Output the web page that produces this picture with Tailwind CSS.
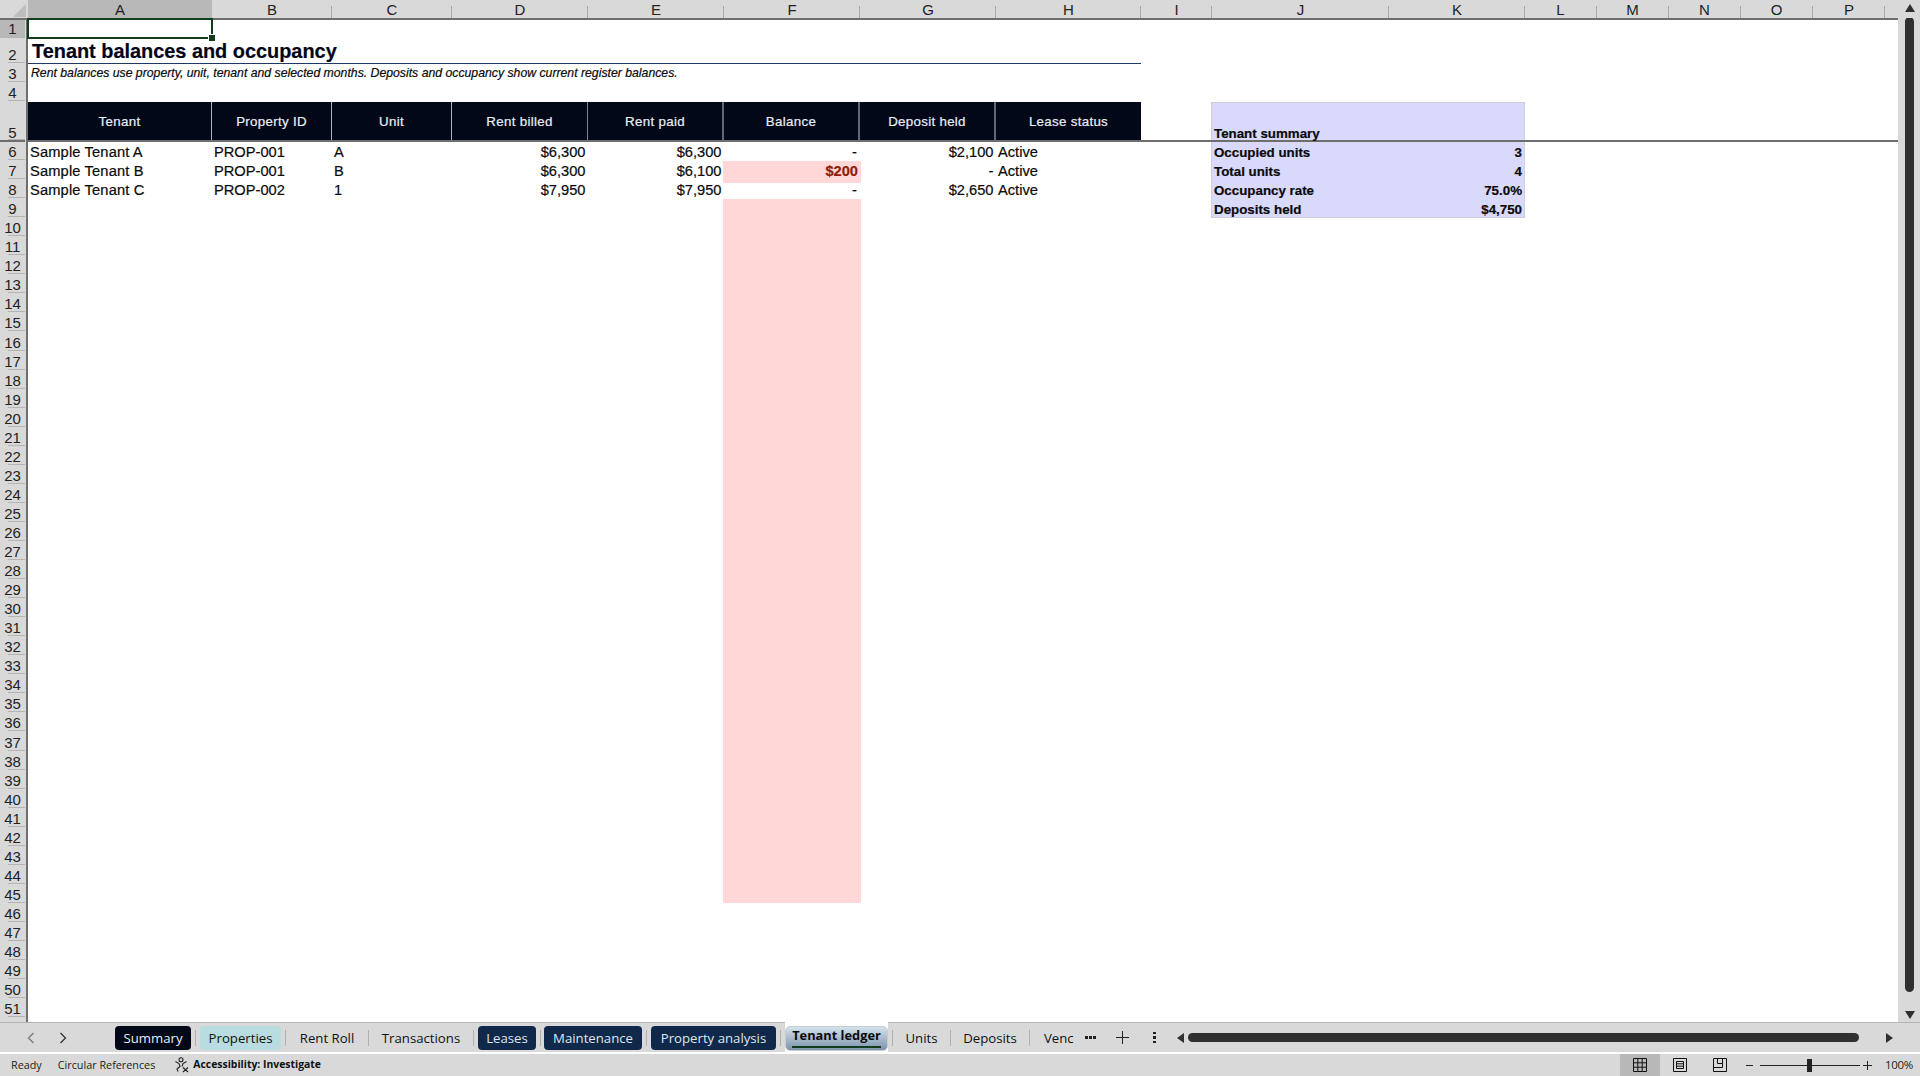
<!DOCTYPE html>
<html>
<head>
<meta charset="utf-8">
<script src="https://cdn.jsdelivr.net/npm/@tailwindcss/browser@4"></script>
</head>
<body class="bg-[#d9d9d9] font-['Liberation_Sans',Arial,sans-serif] text-black overflow-hidden">
<div class="w-[1920px] h-[1076px] flex flex-col overflow-hidden">

  <!-- column headers -->
  <div class="flex h-[18px] shrink-0 text-[15px] leading-[19px] text-[#222] text-center">
    <div class="w-[28px] relative shrink-0">
      <svg class="absolute left-[12px] top-[4px]" width="15" height="14"><polygon points="14,0 14,13 1,13" fill="#bdbdbd"/></svg>
    </div>
    <div class="w-[184px] bg-[#b8b8b8]">A</div>
    <div class="w-[120px] relative">B<span class="absolute right-0 bottom-0 h-[12px] w-px bg-[#a8a8a8]"></span></div>
    <div class="w-[120px] relative">C<span class="absolute right-0 bottom-0 h-[12px] w-px bg-[#a8a8a8]"></span></div>
    <div class="w-[136px] relative">D<span class="absolute right-0 bottom-0 h-[12px] w-px bg-[#a8a8a8]"></span></div>
    <div class="w-[136px] relative">E<span class="absolute right-0 bottom-0 h-[12px] w-px bg-[#a8a8a8]"></span></div>
    <div class="w-[136px] relative">F<span class="absolute right-0 bottom-0 h-[12px] w-px bg-[#a8a8a8]"></span></div>
    <div class="w-[136px] relative">G<span class="absolute right-0 bottom-0 h-[12px] w-px bg-[#a8a8a8]"></span></div>
    <div class="w-[145px] relative">H<span class="absolute right-0 bottom-0 h-[12px] w-px bg-[#a8a8a8]"></span></div>
    <div class="w-[71px] relative">I<span class="absolute right-0 bottom-0 h-[12px] w-px bg-[#a8a8a8]"></span></div>
    <div class="w-[177px] relative">J<span class="absolute right-0 bottom-0 h-[12px] w-px bg-[#a8a8a8]"></span></div>
    <div class="w-[136px] relative">K<span class="absolute right-0 bottom-0 h-[12px] w-px bg-[#a8a8a8]"></span></div>
    <div class="w-[72px] relative pr-px">L<span class="absolute right-0 bottom-0 h-[12px] w-px bg-[#a8a8a8]"></span></div>
    <div class="w-[72px] relative pr-px">M<span class="absolute right-0 bottom-0 h-[12px] w-px bg-[#a8a8a8]"></span></div>
    <div class="w-[72px] relative pr-px">N<span class="absolute right-0 bottom-0 h-[12px] w-px bg-[#a8a8a8]"></span></div>
    <div class="w-[72px] relative pr-px">O<span class="absolute right-0 bottom-0 h-[12px] w-px bg-[#a8a8a8]"></span></div>
    <div class="w-[72px] relative">P<span class="absolute right-0 bottom-0 h-[12px] w-px bg-[#a8a8a8]"></span></div>
    <div class="flex-1 relative">
      <svg class="absolute left-[20px] top-[4px]" width="10" height="8"><polygon points="5,0 10,8 0,8" fill="#2f2f2f"/></svg>
    </div>
  </div>

  <!-- middle: row numbers, sheet, scrollbar -->
  <div class="flex h-[1004px] shrink-0 overflow-hidden">
    <!-- row numbers -->
    <div class="w-[28px] shrink-0 flex flex-col overflow-hidden border-t-2 border-r-2 border-[#6e6e6e] text-[15px] text-[#222] text-center leading-[17px] box-border pr-px [&>div]:shrink-0 [&>div]:flex [&>div]:items-end [&>div]:justify-center [&>div]:bg-[linear-gradient(#b4b4b4,#b4b4b4)] [&>div]:bg-no-repeat [&>div]:bg-[length:17px_1px] [&>div]:bg-[position:right_bottom]">
      <div class="h-[19px] bg-[#b8b8b8] -mt-px leading-[18px]">1</div>
      <div class="h-[25px]">2</div>
      <div class="h-[19px]">3</div>
      <div class="h-[19px]">4</div>
      <div class="h-[40.5px] border-b-2 border-[#6e6e6e] leading-[14px]">5</div>
      <div class="h-[18.55px]">6</div>
      <div class="h-[19.05px]">7</div>
      <div class="h-[19.05px]">8</div>
      <div class="h-[19.05px]">9</div>
      <div class="h-[19.05px]">10</div>
      <div class="h-[19.05px]">11</div>
      <div class="h-[19.05px]">12</div>
      <div class="h-[19.05px]">13</div>
      <div class="h-[19.05px]">14</div>
      <div class="h-[19.05px]">15</div>
      <div class="h-[19.05px]">16</div>
      <div class="h-[19.05px]">17</div>
      <div class="h-[19.05px]">18</div>
      <div class="h-[19.05px]">19</div>
      <div class="h-[19.05px]">20</div>
      <div class="h-[19.05px]">21</div>
      <div class="h-[19.05px]">22</div>
      <div class="h-[19.05px]">23</div>
      <div class="h-[19.05px]">24</div>
      <div class="h-[19.05px]">25</div>
      <div class="h-[19.05px]">26</div>
      <div class="h-[19.05px]">27</div>
      <div class="h-[19.05px]">28</div>
      <div class="h-[19.05px]">29</div>
      <div class="h-[19.05px]">30</div>
      <div class="h-[19.05px]">31</div>
      <div class="h-[19.05px]">32</div>
      <div class="h-[19.05px]">33</div>
      <div class="h-[19.05px]">34</div>
      <div class="h-[19.05px]">35</div>
      <div class="h-[19.05px]">36</div>
      <div class="h-[19.05px]">37</div>
      <div class="h-[19.05px]">38</div>
      <div class="h-[19.05px]">39</div>
      <div class="h-[19.05px]">40</div>
      <div class="h-[19.05px]">41</div>
      <div class="h-[19.05px]">42</div>
      <div class="h-[19.05px]">43</div>
      <div class="h-[19.05px]">44</div>
      <div class="h-[19.05px]">45</div>
      <div class="h-[19.05px]">46</div>
      <div class="h-[19.05px]">47</div>
      <div class="h-[19.05px]">48</div>
      <div class="h-[19.05px]">49</div>
      <div class="h-[19.05px]">50</div>
      <div class="h-[19.05px]">51</div>
    </div>

    <!-- sheet -->
    <div class="w-[1870px] shrink-0 bg-white flex flex-col border-t-2 border-[#6e6e6e] relative text-[14.67px] leading-[20px] text-[#0a0a0a] [-webkit-text-stroke:0.2px]">
      <!-- selected cell A1 -->
      <div class="absolute left-[-1px] top-[-2px] w-[186px] h-[21px] border-[2.5px] border-[#0f3d1e] z-10">
        <span class="absolute right-[-4px] bottom-[-4px] w-[6px] h-[6px] bg-[#0f3d1e] border border-white box-content -mr-px -mb-px"></span>
      </div>
      <div class="h-[17.5px] shrink-0"></div>
      <!-- title -->
      <div class="h-[26px] shrink-0 w-[1113px] border-b-[1.5px] border-[#1f3864] pl-[4px] text-[19.9px] leading-[27px] font-bold text-[#020617]">Tenant balances and occupancy</div>
      <div class="h-[19px] shrink-0 pl-[3px] text-[12.25px] leading-[19px] italic">Rent balances use property, unit, tenant and selected months. Deposits and occupancy show current register balances.</div>
      <div class="h-[19px] shrink-0"></div>

      <!-- header row -->
      <div class="h-[40px] shrink-0 border-b-2 border-[#6e6e6e] grid grid-cols-[184px_120px_120px_136px_136px_136px_136px_145px_70px_178px_136px]">
        <div class="bg-[#020817] text-[#e8eef4] text-[13.33px] pt-[2px] flex items-center justify-center tracking-[0.3px] border-r border-[#a9b4c2]">Tenant</div>
        <div class="bg-[#020817] text-[#e8eef4] text-[13.33px] pt-[2px] flex items-center justify-center tracking-[0.3px] border-r border-[#a9b4c2]">Property ID</div>
        <div class="bg-[#020817] text-[#e8eef4] text-[13.33px] pt-[2px] flex items-center justify-center tracking-[0.3px] border-r border-[#a9b4c2]">Unit</div>
        <div class="bg-[#020817] text-[#e8eef4] text-[13.33px] pt-[2px] flex items-center justify-center tracking-[0.3px] border-r border-[#78869a]">Rent billed</div>
        <div class="bg-[#020817] text-[#e8eef4] text-[13.33px] pt-[2px] flex items-center justify-center tracking-[0.3px] border-r-2 border-[#5f6976]">Rent paid</div>
        <div class="bg-[#020817] text-[#e8eef4] text-[13.33px] pt-[2px] flex items-center justify-center tracking-[0.3px] border-r-2 border-[#5f6976]">Balance</div>
        <div class="bg-[#020817] text-[#e8eef4] text-[13.33px] pt-[2px] flex items-center justify-center tracking-[0.3px] border-r-2 border-[#5f6976]">Deposit held</div>
        <div class="bg-[#020817] text-[#e8eef4] text-[13.33px] pt-[2px] flex items-center justify-center tracking-[0.3px]">Lease status</div>
        <div></div>
        <div class="bg-[#d9d9fb] border-t border-l border-[#cfcfd8] flex items-end pl-[2px] text-[13.33px] leading-[13px] font-bold">Tenant summary</div>
        <div class="bg-[#d9d9fb] border-t border-r border-[#cfcfd8]"></div>
      </div>

      <!-- data rows -->
      <div class="h-[19.05px] shrink-0 grid grid-cols-[184px_120px_120px_136px_136px_136px_136px_145px_70px_178px_136px]">
        <div class="pl-[2px] tracking-[0.15px]">Sample Tenant A</div><div class="pl-[2px]">PROP-001</div><div class="pl-[2px]">A</div>
        <div class="text-right pr-[2.5px]">$6,300</div><div class="text-right pr-[2.5px]">$6,300</div>
        <div class="text-right pr-[3px]">-</div><div class="text-right pr-[2.5px]">$2,100</div><div class="pl-[2px]">Active</div><div></div>
        <div class="bg-[#d9d9fb] pl-[2px] text-[13.33px] leading-[22px] font-bold border-l border-[#cfcfd8]">Occupied units</div><div class="bg-[#d9d9fb] text-right pr-[2px] text-[13.33px] leading-[22px] font-bold border-r border-[#cfcfd8]">3</div>
      </div>
      <div class="h-[19.05px] shrink-0 grid grid-cols-[184px_120px_120px_136px_136px_136px_136px_145px_70px_178px_136px]">
        <div class="pl-[2px] tracking-[0.15px]">Sample Tenant B</div><div class="pl-[2px]">PROP-001</div><div class="pl-[2px]">B</div>
        <div class="text-right pr-[2.5px]">$6,300</div><div class="text-right pr-[2.5px]">$6,100</div>
        <div class="text-right pr-[3px] bg-[#ffd7d7] text-[#8f1d06] font-bold -ml-px -mr-px">$200</div><div class="text-right pr-[2.5px]">-</div><div class="pl-[2px]">Active</div><div></div>
        <div class="bg-[#d9d9fb] pl-[2px] text-[13.33px] leading-[22px] font-bold border-l border-[#cfcfd8]">Total units</div><div class="bg-[#d9d9fb] text-right pr-[2px] text-[13.33px] leading-[22px] font-bold border-r border-[#cfcfd8]">4</div>
      </div>
      <div class="h-[19.05px] shrink-0 grid grid-cols-[184px_120px_120px_136px_136px_136px_136px_145px_70px_178px_136px]">
        <div class="pl-[2px] tracking-[0.15px]">Sample Tenant C</div><div class="pl-[2px]">PROP-002</div><div class="pl-[2px]">1</div>
        <div class="text-right pr-[2.5px]">$7,950</div><div class="text-right pr-[2.5px]">$7,950</div>
        <div class="text-right pr-[3px]">-</div><div class="text-right pr-[2.5px]">$2,650</div><div class="pl-[2px]">Active</div><div></div>
        <div class="bg-[#d9d9fb] pl-[2px] text-[13.33px] leading-[22px] font-bold border-l border-[#cfcfd8]">Occupancy rate</div><div class="bg-[#d9d9fb] text-right pr-[2px] text-[13.33px] leading-[22px] font-bold border-r border-[#cfcfd8]">75.0%</div>
      </div>
      <!-- rows 9 to 45 -->
      <div class="shrink-0 grid grid-cols-[184px_120px_120px_136px_136px_136px_136px_145px_70px_178px_136px] grid-rows-[19.05px_685px]">
        <div class="col-start-6 row-start-1 row-span-2 bg-[#ffd7d7] -ml-px -mr-px"></div>
        <div class="col-start-10 row-start-1 bg-[#d9d9fb] pl-[2px] text-[13.33px] leading-[22px] font-bold border-l border-b border-[#cfcfd8]">Deposits held</div>
        <div class="col-start-11 row-start-1 bg-[#d9d9fb] text-right pr-[2px] text-[13.33px] leading-[22px] font-bold border-r border-b border-[#cfcfd8]">$4,750</div>
      </div>
    </div>

    <!-- vertical scrollbar -->
    <div class="flex-1 relative border-t-2 border-transparent">
      <div class="mt-[-3px] ml-[7px] w-[9px] h-[975px] bg-[#2f2f2f] rounded-full"></div>
      <svg class="absolute left-[7px] bottom-[3px]" width="10" height="8"><polygon points="0,0 10,0 5,8" fill="#2f2f2f"/></svg>
    </div>
  </div>

  <!-- tab bar -->
  <div class="h-[32px] shrink-0 border-t border-[#b4b4b4] border-b-2 border-b-white box-border flex items-center font-['Open_Sans',sans-serif] text-[13.2px] text-[#111] relative">
    <svg class="ml-[26px]" width="10" height="14" viewBox="0 0 10 14"><path d="M7.5 2 2.5 7l5 5" fill="none" stroke="#7a7a7a" stroke-width="1.3"/></svg>
    <svg class="ml-[22px]" width="10" height="14" viewBox="0 0 10 14"><path d="M2.5 2l5 5-5 5" fill="none" stroke="#333" stroke-width="1.3"/></svg>
    <div class="ml-[47px] w-[76px] h-[24px] pt-[2px] rounded-[4px] bg-[#020817] text-[#e8edf3] flex items-center justify-center">Summary</div>
    <span class="ml-[4px] w-px h-[16px] bg-[#b0b0b0]"></span>
    <div class="ml-[4px] w-[81px] h-[24px] pt-[2px] rounded-[4px] bg-[#b8dcdf] flex items-center justify-center">Properties</div>
    <span class="ml-[4px] w-px h-[16px] bg-[#b0b0b0]"></span>
    <div class="w-[82px] h-[24px] pt-[2px] flex items-center justify-center">Rent Roll</div>
    <span class="w-px h-[16px] bg-[#b0b0b0]"></span>
    <div class="w-[104px] h-[24px] pt-[2px] flex items-center justify-center">Transactions</div>
    <span class="w-px h-[16px] bg-[#b0b0b0]"></span>
    <div class="ml-[4px] w-[58px] h-[24px] pt-[2px] rounded-[4px] bg-[#10294a] text-[#dfe6ee] flex items-center justify-center">Leases</div>
    <span class="ml-[4px] w-px h-[16px] bg-[#b0b0b0]"></span>
    <div class="ml-[3px] w-[98px] h-[24px] pt-[2px] rounded-[4px] bg-[#10294a] text-[#dfe6ee] flex items-center justify-center">Maintenance</div>
    <span class="ml-[4px] w-px h-[16px] bg-[#b0b0b0]"></span>
    <div class="ml-[4px] w-[125px] h-[24px] pt-[2px] rounded-[4px] bg-[#10294a] text-[#dfe6ee] flex items-center justify-center">Property analysis</div>
    <span class="ml-[4px] w-px h-[16px] bg-[#b0b0b0]"></span>
    <div class="ml-[4px] w-[103px] h-[30px] self-start -mt-px bg-white pt-[4px] relative">
      <div class="h-[25px] rounded-[5px] border border-[#c4ccd4] bg-gradient-to-b from-[#d3e2ec] to-[#7d93ac] font-bold text-[12.8px] text-[#0b0b0b] text-center leading-[17px]">Tenant ledger</div>
      <span class="absolute left-[7px] right-[7px] bottom-[4px] h-[2px] bg-[#0f3d1e]"></span>
    </div>
    <span class="ml-[4px] w-px h-[16px] bg-[#b0b0b0]"></span>
    <div class="w-[57px] h-[24px] pt-[2px] flex items-center justify-center">Units</div>
    <span class="w-px h-[16px] bg-[#b0b0b0]"></span>
    <div class="w-[78px] h-[24px] pt-[2px] flex items-center justify-center">Deposits</div>
    <span class="w-px h-[16px] bg-[#b0b0b0]"></span>
    <div class="w-[45px] h-[24px] overflow-hidden pl-[14px] leading-[24px]">Venc</div>
    <div class="ml-[10px] flex gap-[1px]"><span class="w-[3px] h-[3px] bg-[#222]"></span><span class="w-[3px] h-[3px] bg-[#222]"></span><span class="w-[3px] h-[3px] bg-[#222]"></span></div>
    <svg class="ml-[20px]" width="13" height="13" viewBox="0 0 13 13"><path d="M6.5 0v13M0 6.500h13" stroke="#222" stroke-width="1"/></svg>
    <div class="ml-[24px] flex flex-col gap-[2px]"><span class="w-[2.500px] h-[2.500px] bg-[#222]"></span><span class="w-[2.500px] h-[2.500px] bg-[#222]"></span><span class="w-[2.500px] h-[2.500px] bg-[#222]"></span></div>
    <svg class="ml-[21px]" width="8" height="10"><polygon points="7,0 7,10 0,5" fill="#2f2f2f"/></svg>
    <div class="ml-[3px] w-[671px] h-[9px] rounded-full bg-[#2f2f2f]"></div>
    <svg class="ml-[27px]" width="8" height="10"><polygon points="0,0 0,10 7,5" fill="#2f2f2f"/></svg>
  </div>

  <!-- status bar -->
  <div class="h-[22px] shrink-0 flex items-center font-['Open_Sans',sans-serif] text-[10.8px] text-[#222]">
    <span class="ml-[11px]">Ready</span>
    <span class="ml-[16px]">Circular References</span>
    <svg class="ml-[19px]" width="16" height="16" viewBox="0 0 16 16" fill="none" stroke="#222" stroke-width="1.100"><circle cx="7" cy="2.800" r="2"/><path d="M1.500 4.500l3.500 2 1 3-3 2.500 1 2.500M12.500 4.500l-3.500 2-1 3M9 10.500l5 4.500M14 10.500 9 15"/></svg>
    <span class="ml-[3px] font-bold text-[10.4px] text-[#111]">Accessibility: Investigate</span>
    <div class="ml-auto w-[40px] h-[22px] bg-[#b8b8b8] flex items-center justify-center">
      <svg width="14" height="14" viewBox="0 0 14 14" fill="none" stroke="#111" stroke-width="1"><path d="M.5.500h13v13H.5zM.5 4.800h13M.5 9.200h13M4.800.5v13M9.200.5v13"/></svg>
    </div>
    <div class="w-[40px] flex justify-center">
      <svg width="14" height="14" viewBox="0 0 14 14" fill="none" stroke="#111" stroke-width="1"><path d="M.5.500h13v13H.5zM3.500 3.500h7v7h-7zM3.500 5.800h7M3.500 8.200h7"/></svg>
    </div>
    <div class="w-[40px] flex justify-center">
      <svg width="14" height="14" viewBox="0 0 14 14" fill="none" stroke="#111" stroke-width="1"><path d="M.5.500h13v13H.5zM.5 9.500h9v-9M4.500.5v5h5"/></svg>
    </div>
    <div class="ml-[6.500px] w-[7px] h-px bg-[#222]"></div>
    <div class="ml-[6.500px] w-[100px] h-px bg-[#222] relative"><span class="absolute left-[47px] top-[-6px] w-[5px] h-[13px] bg-[#222]"></span></div>
    <svg class="ml-[3.500px]" width="9" height="9" viewBox="0 0 9 9"><path d="M4.500 0v9M0 4.500h9" stroke="#222" stroke-width="1"/></svg>
    <span class="ml-[13px] w-[28px] mr-[7px] text-[11.5px] tracking-[-0.3px] whitespace-nowrap">100%</span>
  </div>
</div>
</body>
</html>
